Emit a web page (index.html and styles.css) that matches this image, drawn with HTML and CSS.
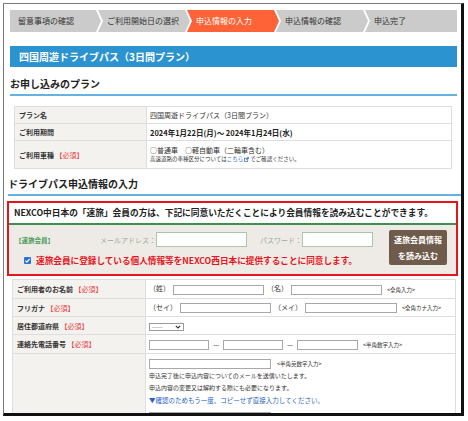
FILE: index.html
```html
<!DOCTYPE html>
<html lang="ja">
<head>
<meta charset="utf-8">
<title>申込情報の入力</title>
<link rel="stylesheet" href="styles.css">
</head>
<body>
<div class="frame">
  <div class="page">
    <ol class="steps">
      <li class="step first">留意事項の確認</li>
      <li class="step">ご利用開始日の選択</li>
      <li class="step current">申込情報の入力</li>
      <li class="step">申込情報の確認</li>
      <li class="step last">申込完了</li>
    </ol>

    <div class="plan-bar">四国周遊ドライブパス（3日間プラン）</div>

    <h2 class="sec-title">お申し込みのプラン</h2>
    <table class="plan-table">
      <tr class="r1"><th>プラン名</th><td>四国周遊ドライブパス（3日間プラン）</td></tr>
      <tr class="r1"><th>ご利用期間</th><td class="strong">2024年1月22日(月)～ 2024年1月24日(水)</td></tr>
      <tr class="r2">
        <th>ご利用車種 <span class="req">【必須】</span></th>
        <td>
          <div class="radios">○普通車　○軽自動車（二輪車含む）</div>
          <div class="tiny">高速道路の車種区分については<span class="link">こちら</span><svg class="ext" viewBox="0 0 6 6" width="5" height="5"><rect x="0.5" y="1.5" width="4" height="4" fill="none" stroke="#2a62c4" stroke-width="0.8"/><path d="M2.5 3.5 L5.5 0.5 M3.5 0.5 H5.5 V2.5" fill="none" stroke="#2a62c4" stroke-width="0.8"/></svg>でご確認ください。</div>
        </td>
      </tr>
    </table>

    <h2 class="sec-title wide">ドライブパス申込情報の入力</h2>

    <div class="member-box">
      <div class="mb-head">NEXCO中日本の「速旅」会員の方は、下記に同意いただくことにより会員情報を読み込むことができます。</div>
      <div class="mb-body">
        <div class="mb-left">
          <div class="mb-fields">
            <span class="mb-tag">【速旅会員】</span>
            <span class="mb-label">メールアドレス：</span>
            <input class="mb-input mail" type="text">
            <span class="mb-label pw">パスワード：</span>
            <input class="mb-input pass" type="password">
          </div>
          <div class="mb-consent">
            <svg class="cb" viewBox="0 0 7 7" width="7" height="7"><rect width="7" height="7" rx="1" fill="#2c6fd6"/><path d="M1.4 3.6 L2.9 5.1 L5.7 1.9" stroke="#fff" stroke-width="1.1" fill="none"/></svg>
            <span>速旅会員に登録している個人情報等をNEXCO西日本に提供することに同意します。</span>
          </div>
        </div>
        <button class="mb-btn" type="button">速旅会員情報<br>を読み込む</button>
      </div>
    </div>

    <table class="form-table">
      <tr class="f1">
        <th>ご利用者のお名前 <span class="req">【必須】</span></th>
        <td><span class="lab">（姓）</span><input class="fi w91" type="text"><span class="lab">（名）</span><input class="fi w91" type="text"><span class="hint">&lt;全角入力&gt;</span></td>
      </tr>
      <tr class="f2">
        <th>フリガナ <span class="req">【必須】</span></th>
        <td><span class="lab">（セイ）</span><input class="fi w91" type="text"><span class="lab">（メイ）</span><input class="fi w92" type="text"><span class="hint">&lt;全角カナ入力&gt;</span></td>
      </tr>
      <tr class="f2">
        <th>居住都道府県 <span class="req">【必須】</span></th>
        <td><span class="sel">------<svg viewBox="0 0 6 4" width="6" height="4"><path d="M0.8 0.8 L3 3 L5.2 0.8" fill="none" stroke="#333" stroke-width="1.1"/></svg></span></td>
      </tr>
      <tr class="f1">
        <th>連絡先電話番号 <span class="req">【必須】</span></th>
        <td><input class="fi w60" type="text"><span class="dash">－</span><input class="fi w60" type="text"><span class="dash">－</span><input class="fi w61" type="text"><span class="hint">&lt;半角数字入力&gt;</span></td>
      </tr>
      <tr class="f5">
        <th></th>
        <td>
          <div class="line-in"><input class="fi w122" type="text"><span class="hint">&lt;半角英数字入力&gt;</span></div>
          <div class="note">申込完了後に申込内容についてのメールを送信いたします。</div>
          <div class="note">申込内容の変更又は解約する際にも必要になります。</div>
          <div class="again">▼確認のためもう一度、コピーせず直接入力してください。</div>
          <div class="line-in second"><input class="fi w122" type="text"><span class="hint">&lt;半角英数字入力&gt;</span></div>
        </td>
      </tr>
    </table>
  </div>
</div>
</body>
</html>
```

FILE: styles.css
```css
* { box-sizing: border-box; }

html, body {
  margin: 0;
  padding: 0;
  background: #ffffff;
}

body {
  font-family: "Noto Sans CJK JP", "Noto Sans", sans-serif;
  color: #333333;
}

.frame {
  margin: 3px 0 0 3px;
  width: 461px;
  height: 413px;
  border-left: 1px solid #7a7a7a;
  border-top: 1px solid #7a7a7a;
  border-right: 3px solid #111111;
  border-bottom: 3px solid #111111;
  overflow: hidden;
  background: #ffffff;
}

.page {
  padding: 6px 4px 0 6px;
}

/* steps */
.steps {
  display: flex;
  list-style: none;
  margin: 0;
  padding: 0;
  height: 22px;
}

.step {
  flex: 1 1 0;
  min-width: 0;
  height: 22px;
  margin-left: -3px;
  padding-left: 9px;
  background: #cbcbcb;
  color: #333333;
  font-size: 8px;
  line-height: 22px;
  white-space: nowrap;
  clip-path: polygon(0 0, calc(100% - 5px) 0, 100% 50%, calc(100% - 5px) 100%, 0 100%, 5px 50%);
}

.step.first {
  margin-left: 0;
  padding-left: 8px;
  clip-path: polygon(0 0, calc(100% - 5px) 0, 100% 50%, calc(100% - 5px) 100%, 0 100%);
}

.step.last {
  clip-path: polygon(0 0, 100% 0, 100% 100%, 0 100%, 5px 50%);
}

.step.current {
  background: #fd6336;
  color: #ffffff;
}

/* plan bar */
.plan-bar {
  margin-top: 14px;
  height: 21px;
  padding-left: 9px;
  background: #2c93d1;
  color: #ffffff;
  font-size: 10px;
  font-weight: bold;
  line-height: 21px;
}

.sec-title {
  margin: 7px 0 0 0;
  font-size: 10px;
  font-weight: bold;
  line-height: 20px;
  color: #222222;
  border-bottom: 2px solid #64b1e2;
}

.sec-title.wide {
  margin: 5px -4px 0 -2px;
}

/* plan table */
.plan-table {
  margin: 10px 5px 0 4px;
  width: 438px;
  border-collapse: collapse;
  font-size: 7px;
}

.plan-table th,
.plan-table td {
  border: 1px solid #dedede;
  text-align: left;
  vertical-align: middle;
  padding: 0 3px;
}

.plan-table th {
  width: 132px;
  background: #f3f2ee;
  font-weight: bold;
  color: #333333;
  padding-left: 4px;
}

.plan-table .r1 { height: 17px; }
.plan-table .r2 { height: 28px; }

.plan-table td.strong {
  font-weight: bold;
  font-size: 7.5px;
  color: #222222;
}

.req {
  color: #e83a3f;
  font-weight: normal;
}

.radios {
  line-height: 10px;
  font-size: 7px;
}

.tiny {
  font-size: 5.5px;
  line-height: 9px;
}

.link { color: #2a62c4; }

.ext { vertical-align: -0.5px; margin: 0 1px; }

/* member box */
.member-box {
  margin: 5px -1px 0 -3px;
  border: 2px solid #e8141c;
}

.mb-head {
  height: 22px;
  padding-left: 5px;
  font-size: 8.7px;
  font-weight: bold;
  line-height: 20px;
  color: #222222;
  border-bottom: 2px solid #3f8f4f;
  white-space: nowrap;
}

.mb-body {
  display: flex;
  align-items: flex-start;
  height: 49px;
  padding: 5px 9px 0 6px;
  background: #eeebe6;
}

.mb-left {
  display: flex;
  flex-direction: column;
}

.mb-fields {
  display: flex;
  align-items: center;
  height: 19px;
}

.mb-tag {
  width: 85px;
  font-size: 6.5px;
  font-weight: bold;
  color: #4a9a58;
}

.mb-label {
  font-size: 7px;
  color: #96ad96;
  white-space: nowrap;
}

.mb-label.pw { margin-left: 13px; }

.mb-input {
  height: 15px;
  border: 1px solid #a9c6a9;
  background: #ffffff;
  padding: 0;
  margin: 0;
}

.mb-input.mail { width: 91px; }
.mb-input.pass { width: 71px; }

.mb-consent {
  display: flex;
  align-items: center;
  height: 14px;
  margin-top: 4px;
  padding-left: 9px;
  font-size: 8.65px;
  font-weight: bold;
  color: #e8141c;
  white-space: nowrap;
}

.cb { margin-right: 5px; flex: none; }

.mb-btn {
  margin-left: auto;
  width: 58px;
  height: 35px;
  padding: 0;
  border: none;
  border-radius: 2px;
  background: #6f5b4b;
  color: #ffffff;
  font-family: inherit;
  font-size: 8px;
  font-weight: bold;
  line-height: 16px;
}

/* form table */
.form-table {
  margin: 3px 1px 0 2px;
  width: 444px;
  border-collapse: collapse;
  font-size: 7px;
}

.form-table th,
.form-table td {
  border: 1px solid #dedede;
  text-align: left;
  padding: 0 3px;
  white-space: nowrap;
}

.form-table th {
  width: 133px;
  background: #f3f2ee;
  font-weight: bold;
  color: #333333;
  padding-left: 4px;
  vertical-align: middle;
}

.form-table td {
  vertical-align: middle;
}

.form-table .f1 { height: 19px; }
.form-table .f2 { height: 18px; }
.form-table .f5 td { vertical-align: top; padding-top: 4px; }

.lab { color: #333333; margin-right: 3px; }
.lab + input + .lab { margin-left: 3px; }

.fi {
  display: inline-block;
  height: 10px;
  border: 1px solid #a8a8a8;
  background: #ffffff;
  padding: 0;
  margin: 0;
  vertical-align: middle;
}

.w60 { width: 60px; }
.w61 { width: 61px; }
.w91 { width: 91px; }
.w92 { width: 92px; }
.w122 { width: 122px; }

.hint {
  margin-left: 5px;
  font-size: 5.5px;
  color: #333333;
  vertical-align: middle;
}

.dash {
  display: inline-block;
  width: 14px;
  text-align: center;
  vertical-align: middle;
}

.sel {
  display: inline-flex;
  align-items: center;
  justify-content: space-between;
  width: 35px;
  height: 8px;
  padding: 0 2px;
  border: 1px solid #9a9a9a;
  font-size: 5px;
  line-height: 6px;
  vertical-align: middle;
}

.line-in {
  display: flex;
  align-items: center;
  height: 12px;
}

.line-in .hint { margin-left: 6px; }

.line-in.second { margin-top: 5px; }

.note {
  font-size: 6px;
  line-height: 12px;
}

.note:first-of-type { margin-top: 2px; }

.again {
  font-size: 6.5px;
  line-height: 12px;
  color: #2a5fc4;
}
```
